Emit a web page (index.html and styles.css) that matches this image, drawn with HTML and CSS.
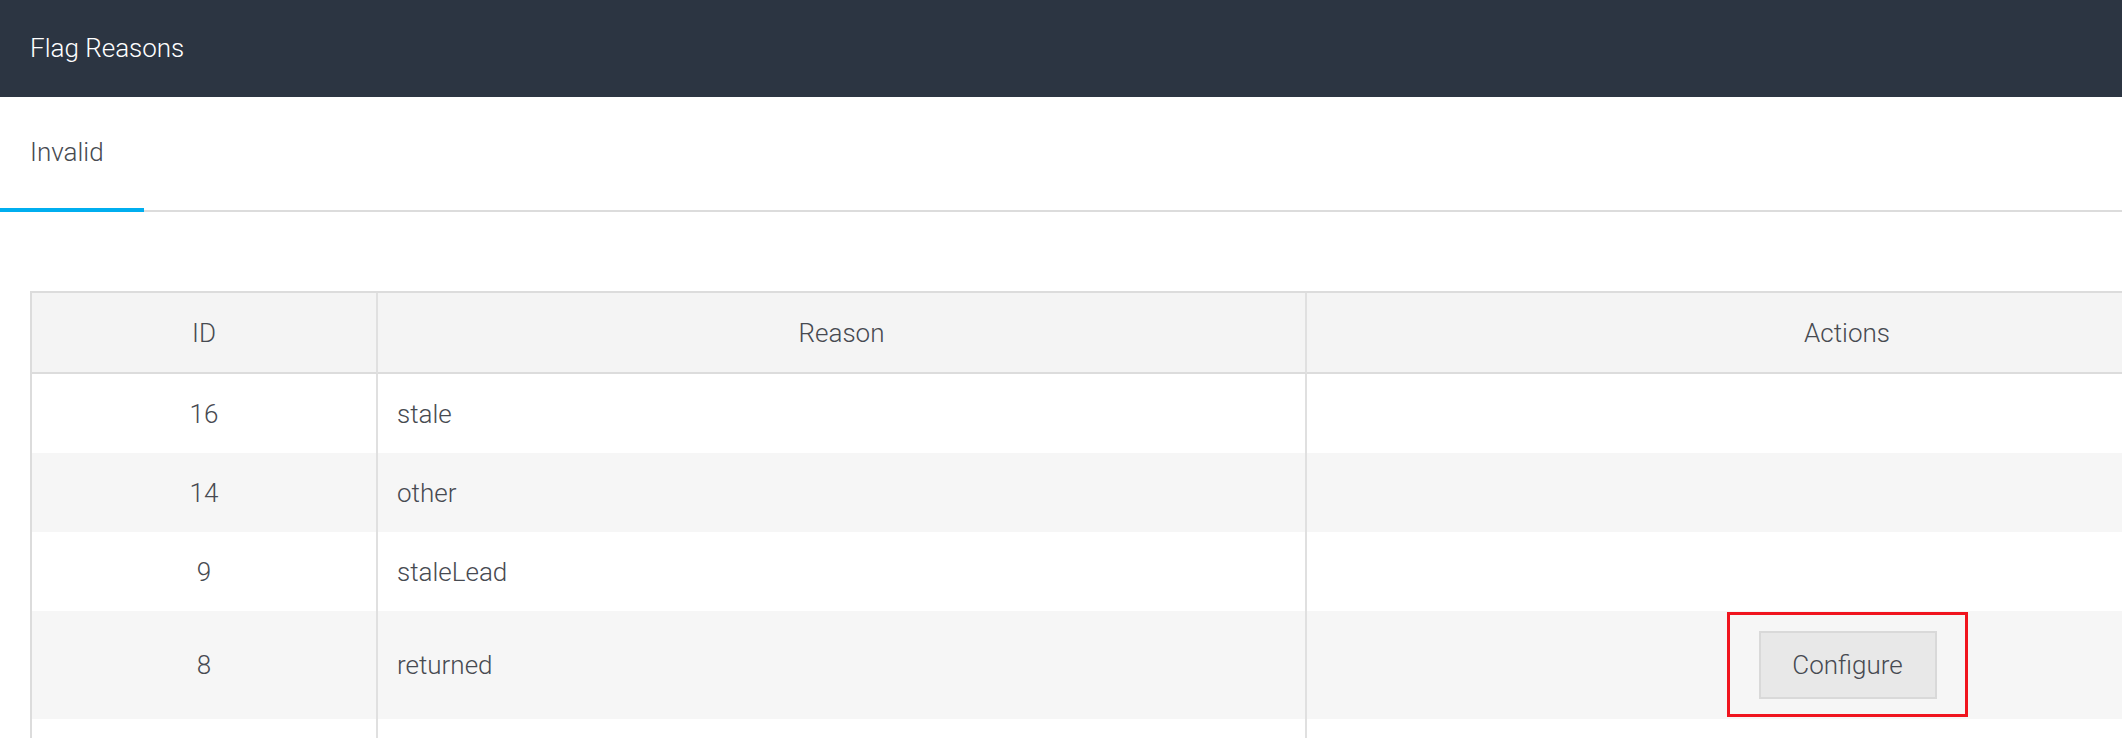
FILE: index.html
```html
<!DOCTYPE html>
<html lang="en">
<head>
<meta charset="utf-8">
<title>Flag Reasons</title>
<link rel="stylesheet" href="styles.css">
</head>
<body>
<div class="page">
  <header class="topbar">Flag Reasons</header>
  <nav class="tabbar">
    <div class="tab active">Invalid</div>
  </nav>
  <main class="content">
    <table class="grid">
      <thead>
        <tr>
          <th class="col-id">ID</th>
          <th class="col-reason">Reason</th>
          <th class="col-actions">Actions</th>
        </tr>
      </thead>
      <tbody>
        <tr>
          <td class="c-id">16</td>
          <td class="c-reason">stale</td>
          <td class="c-actions"></td>
        </tr>
        <tr>
          <td class="c-id">14</td>
          <td class="c-reason">other</td>
          <td class="c-actions"></td>
        </tr>
        <tr>
          <td class="c-id">9</td>
          <td class="c-reason">staleLead</td>
          <td class="c-actions"></td>
        </tr>
        <tr class="tall">
          <td class="c-id">8</td>
          <td class="c-reason">returned</td>
          <td class="c-actions">
            <span class="highlight"><button class="btn" type="button">Configure</button></span>
          </td>
        </tr>
        <tr>
          <td class="c-id">&nbsp;</td>
          <td class="c-reason">&nbsp;</td>
          <td class="c-actions"></td>
        </tr>
      </tbody>
    </table>
  </main>
</div>
</body>
</html>
```
FILE: styles.css
```css
html, body {
  margin: 0;
  padding: 0;
  overflow: hidden;
  background: #ffffff;
}

body {
  font-family: Roboto, "Liberation Sans", Arial, sans-serif;
  color: #474a51;
}

.page {
  width: 2122px;
  height: 738px;
  overflow: hidden;
}

.topbar {
  height: 97px;
  line-height: 97px;
  background: #2c3542;
  color: #ffffff;
  font-size: 26px;
  font-weight: 300;
  padding-left: 30px;
}

.tabbar {
  display: flex;
  border-bottom: 2px solid #dcdcdc;
}

.tab {
  box-sizing: border-box;
  width: 144px;
  height: 115px;
  line-height: 111px;
  padding-left: 30px;
  font-size: 26px;
  font-weight: 300;
  color: #474a51;
  border-bottom: 4px solid transparent;
  margin-bottom: -2px;
}

.tab.active {
  border-bottom-color: #00aeef;
}

.content {
  padding: 79px 0 0 30px;
}

.grid {
  width: 2359px;
  table-layout: fixed;
  border-collapse: separate;
  border-spacing: 0;
  border-top: 2px solid #dcdcdc;
  border-left: 2px solid #dcdcdc;
  font-size: 26px;
  font-weight: 300;
  color: #474a51;
}

.grid th,
.grid td {
  box-sizing: border-box;
  padding: 0;
  vertical-align: middle;
  border-right: 2px solid #e0e0e0;
}

.grid th {
  height: 81px;
  background: #f4f4f4;
  font-weight: 300;
  text-align: center;
  border-bottom: 2px solid #dcdcdc;
}

.col-id { width: 346px; }
.col-reason { width: 929px; }
.col-actions { width: 1082px; }

.grid td {
  height: 79px;
}

.grid tbody tr:nth-child(even) td {
  background: #f6f6f6;
}

.c-id {
  text-align: center;
}

.c-reason {
  text-align: left;
  padding-left: 19px !important;
}

.c-actions {
  text-align: center;
}

.grid tr.tall td {
  height: 108px;
}

.grid tr.tall .c-actions {
  padding: 1px 0 2px;
}

.highlight {
  display: inline-block;
  vertical-align: middle;
  border: 3px solid #f0141e;
  padding: 16px 28px 15px 29px;
}

.btn {
  display: block;
  box-sizing: border-box;
  width: 178px;
  height: 68px;
  margin: 0;
  padding: 0;
  background: #e8e8e8;
  border: 2px solid #d9d9d9;
  border-radius: 0;
  font-family: Roboto, "Liberation Sans", Arial, sans-serif;
  font-size: 26px;
  font-weight: 300;
  color: #474a51;
  line-height: 64px;
  text-align: center;
}
```
